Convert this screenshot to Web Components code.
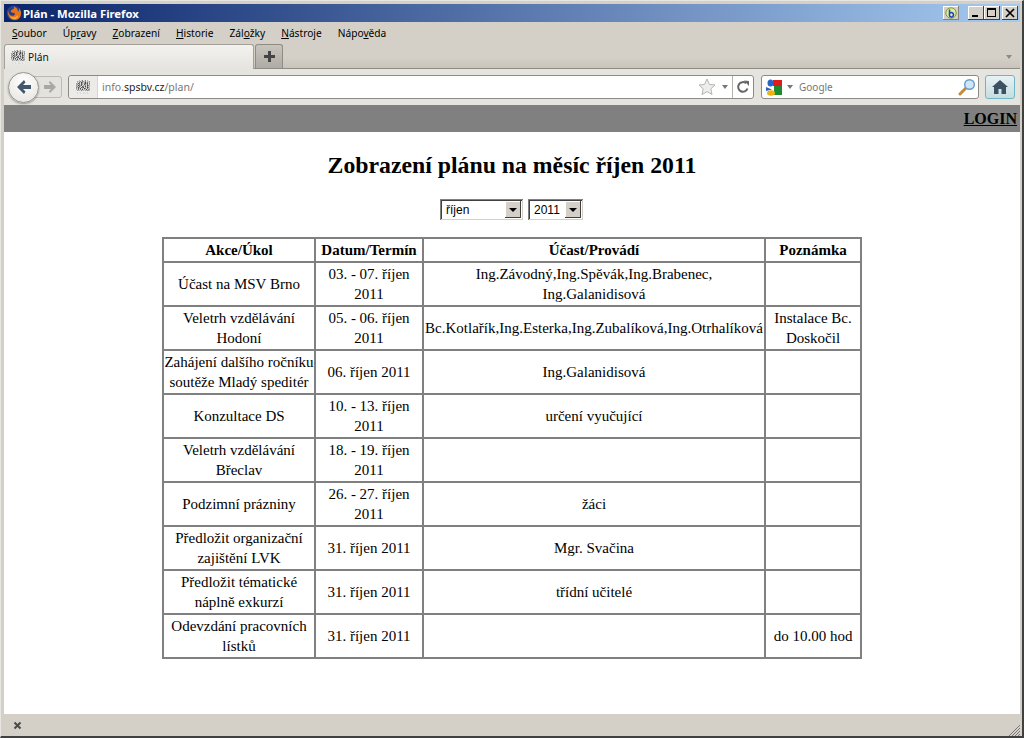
<!DOCTYPE html>
<html lang="cs">
<head>
<meta charset="utf-8">
<title>Plán - Mozilla Firefox</title>
<style>
  html, body { margin: 0; padding: 0; height: 100%; overflow: hidden; background: #d4d0c8; }
</style>
</head>
<body>
<browser-window>
  <plan-page></plan-page>
</browser-window>

<script>
// noisy grey site icon, one rect per pixel
function favicon() {
  const rows = [
    "................",
    "....9.a7.b7.9...",
    "..8a97b68a7c9a8.",
    "..9c6a47b84a6b8.",
    ".8a47c59a7495c7.",
    ".97b6a48c58a6b8.",
    ".8a4795b8a7c479.",
    ".97a68c57a4b6a9.",
    ".7a48b574c8a47a.",
    ".8b5a4c8a47b6a9.",
    ".9a6b7a4c8a4b78.",
    "..8a9b7a9c8a78a.",
    "...............",
    ".cbdcbdccbdcbdc.",
    ".dbcdbcdbcbdbcd.",
    "................"
  ];
  const grey = {"4":"#4c4c4c","5":"#5e5e5e","6":"#727272","7":"#888","8":"#9e9e9e","9":"#b4b4b4",a:"#c8c8c8",b:"#d8d8d8",c:"#e4e4e4",d:"#f0f0f0"};
  let out = "";
  rows.forEach((row, y) => {
    [...row].forEach((c, x) => {
      if (grey[c]) out += `<rect x="${x}" y="${y}" width="1" height="1" fill="${grey[c]}"/>`;
    });
  });
  return `<svg width="16" height="16" viewBox="0 0 16 16" style="flex:none;display:block">${out}</svg>`;
}
const FAVICON = favicon();

class TitleBar extends HTMLElement {
  constructor() {
    super();
    this.shadowDOM = this.attachShadow({mode: "open"});
    this.shadowDOM.innerHTML = `
    <style>
      :host {
        display: flex; align-items: center; height: 18px; flex: none;
        background: linear-gradient(to right, #0a246a, #a6caf0);
        color: #fff; font: bold 11.3px "Noto Sans", sans-serif;
      }
      .logo { margin: 0 1px 0 2px; flex: none; display: block; }
      .name { flex: 1; }
      .b { width: 16px; height: 14px; margin-right: 9px; background: #d4d0c8; display: flex; align-items: center; justify-content: center; box-shadow: inset -1px -1px #808080, inset 1px 1px #fff; }
      .btns { display: flex; margin-right: 2px; }
      .btn { width: 16px; height: 14px; background: #d4d0c8; box-shadow: inset -1px -1px #404040, inset 1px 1px #fff; display: block; }
      .btn.close { margin-left: 2px; }
    </style>
    <svg class="logo" width="16" height="16" viewBox="0 0 16 16">
      <circle cx="8" cy="8" r="7.400" fill="#27408b"/>
      <path d="M2 5C1 10 4 15 9 15c4 0 6-3 6-7 0-2-1-4-2-5 .5 2 0 3-1 3.500C12 4 10 2 7.500 1.500 8.500 3 8 4 6.500 4.500 5 5 4.500 6 5 7c1 1 3 .5 4 1.500C9 11 6 11.500 4 10 2.800 9 2.300 7 2 5z" fill="#e8741a"/>
      <path d="M4 11c2 2 6 2 8-1 .5 2-1.500 4-4 4-2 0-3.500-1.500-4-3z" fill="#f6b13a"/>
    </svg>
    <span class="name">Plán - Mozilla Firefox</span>
    <span class="b">
      <svg width="12" height="12" viewBox="0 0 12 12">
        <circle cx="6" cy="6" r="5.200" fill="#dfe9a8" stroke="#7f9a2c"/>
        <path d="M4.500 2.500v6.500M4.500 6.500a2.200 2.200 0 1 1 0 2.500" fill="none" stroke="#1746b5" stroke-width="1.500"/>
      </svg>
    </span>
    <span class="btns">
      <svg class="btn" viewBox="0 0 16 14"><rect x="4" y="9" width="6" height="2" fill="#000"/></svg>
      <svg class="btn" viewBox="0 0 16 14"><path d="M3 2h9v9H3zM4 4v6h7V4z" fill="#000" fill-rule="evenodd"/></svg>
      <svg class="btn close" viewBox="0 0 16 14"><path d="M4 3l8 8M12 3l-8 8" stroke="#000" stroke-width="1.700"/></svg>
    </span>`;
  }
}
customElements.define("title-bar", TitleBar);

class MenuBar extends HTMLElement {
  constructor() {
    super();
    this.shadowDOM = this.attachShadow({mode: "open"});
    this.shadowDOM.innerHTML = `
    <style>
      :host {
        display: flex; align-items: center; height: 22px; flex: none;
        padding-left: 8px; gap: 16px;
        font: 10.2px "Noto Sans", sans-serif; color: #000; background: #d4d0c8;
      }
      u { text-decoration: underline; }
    </style>
    <span><u>S</u>oubor</span>
    <span>Úp<u>r</u>avy</span>
    <span><u>Z</u>obrazení</span>
    <span><u>H</u>istorie</span>
    <span>Zál<u>o</u>žky</span>
    <span><u>N</u>ástroje</span>
    <span>Nápo<u>v</u>ěda</span>`;
  }
}
customElements.define("menu-bar", MenuBar);

class TabStrip extends HTMLElement {
  constructor() {
    super();
    this.shadowDOM = this.attachShadow({mode: "open"});
    this.shadowDOM.innerHTML = `
    <style>
      :host {
        display: flex; align-items: flex-end; height: 25px; flex: none; box-sizing: border-box;
        background: linear-gradient(#d4d0c8, #d4d0c8 55%, #c8c4bc);
        border-bottom: 1px solid #8f8c86;
        position: relative;
      }
      .tab {
        box-sizing: border-box; width: 250px; height: 25px; margin-bottom: -1px;
        background: linear-gradient(#f3f2ef, #e6e4df);
        border: 1px solid #a3a09a; border-bottom: 0; border-radius: 3px 3px 0 0;
        display: flex; align-items: center; gap: 2px; padding-left: 5px;
        font: 10.2px "Noto Sans", sans-serif; color: #111;
        position: relative; z-index: 1;
      }
      .new {
        box-sizing: border-box; width: 28px; height: 24px; margin-left: 1px;
        background: linear-gradient(#c9c5be, #aeaba4);
        border: 1px solid #8f8c86; border-bottom: 0; border-radius: 3px 3px 0 0;
        display: flex; align-items: center; justify-content: center;
      }
      .more { position: absolute; right: 8px; bottom: 9px; width: 0; height: 0; border: 3px solid transparent; border-top: 4px solid #8c8a84; border-bottom: 0; }
    </style>
    <div class="tab">${FAVICON}<span>Plán</span></div>
    <div class="new">
      <svg width="11" height="11" viewBox="0 0 11 11"><path d="M4 0h3v4h4v3H7v4H4V7H0V4h4z" fill="#444"/></svg>
    </div>
    <div class="more"></div>`;
  }
}
customElements.define("tab-strip", TabStrip);

class NavBar extends HTMLElement {
  constructor() {
    super();
    this.shadowDOM = this.attachShadow({mode: "open"});
    this.shadowDOM.innerHTML = `
    <style>
      :host {
        display: flex; align-items: center; height: 36px; flex: none; box-sizing: border-box;
        background: #e6e4df; padding: 0 0 0 4px;
        font: 10.5px "Noto Sans", sans-serif;
      }
      .nav { display: flex; align-items: center; flex: none; width: 58px; position: relative; height: 32px; }
      .back {
        width: 31px; height: 31px; border-radius: 50%; box-sizing: border-box;
        background: radial-gradient(circle at 50% 30%, #fff, #e4e2dd);
        border: 1px solid #99968f; box-shadow: 0 1px 2px #0005;
        display: flex; align-items: center; justify-content: center; position: relative; z-index: 1;
      }
      .fwd {
        position: absolute; left: 24px; top: 5px; width: 30px; height: 22px; box-sizing: border-box;
        background: #e4e2dd; border: 1px solid #bdbab3; border-radius: 0 3px 3px 0;
        display: flex; align-items: center; justify-content: flex-end; padding-right: 5px;
      }
      .field {
        display: flex; align-items: center; height: 24px; box-sizing: border-box;
        background: #fff; border: 1px solid #8c8a84; border-radius: 3px;
      }
      .url { flex: none; width: 686px; margin-left: 2px; }
      .site { width: 28px; height: 22px; display: flex; align-items: center; justify-content: center; background: #ecebe7; border-right: 1px solid #d8d6d1; border-radius: 3px 0 0 3px; flex: none; }
      .addr { flex: 1; padding-left: 4px; color: #777; white-space: nowrap; }
      .addr b { font-weight: normal; color: #222; }
      .tri { width: 0; height: 0; border: 3px solid transparent; border-top: 4px solid #777; border-bottom: 0; flex: none; }
      .reload { width: 20px; height: 22px; border-left: 1px solid #b5b3ae; display: flex; align-items: center; justify-content: center; margin-left: 4px; flex: none; }
      .search { flex: none; width: 218px; margin-left: 7px; }
      .ph { flex: 1; color: #777; margin-left: 6px; font-size: 10px; }
      .home {
        flex: none; margin-left: 6px; width: 30px; height: 24px; box-sizing: border-box;
        background: linear-gradient(#e8f2f4, #c6dde2); border: 1px solid #6fb6c4; border-radius: 3px;
        display: flex; align-items: center; justify-content: center;
      }
    </style>
    <div class="nav">
      <div class="fwd">
        <svg width="12" height="12" viewBox="0 0 12 12"><path d="M6 0l6 6-6 6-1.200-1.800L7 8H0V4h7L4.800 1.800z" fill="#a9a8a4"/></svg>
      </div>
      <div class="back">
        <svg width="16" height="14" viewBox="0 0 16 14"><path d="M8 0L1 7l7 7 1.500-2.500L7 9h8V5H7l2.500-2.500z" fill="#44586c"/></svg>
      </div>
    </div>
    <div class="field url">
      <div class="site">${FAVICON}</div>
      <div class="addr">info.<b>spsbv.cz</b>/plan/</div>
      <svg width="18" height="18" viewBox="0 0 18 18"><path d="M9 1l2.400 5.400 5.600.6-4.200 3.800 1.200 5.700L9 13.600 4 16.500l1.200-5.700L1 7l5.600-.6z" fill="#eee" stroke="#b5b5b0"/></svg>
      <div class="tri" style="margin-left:6px"></div>
      <div class="reload">
        <svg width="14" height="14" viewBox="0 0 14 14"><path d="M11.500 8.500A4.800 4.800 0 1 1 10 3.200" fill="none" stroke="#666" stroke-width="2"/><path d="M8 .5L13 1v5z" fill="#666"/></svg>
      </div>
    </div>
    <div class="field search">
      <svg width="17" height="17" viewBox="0 0 17 17" style="margin-left:4px;flex:none">
        <path d="M7 1h9v6H7z" fill="#e01b1b"/>
        <path d="M8 7h8v9H8z" fill="#1f8a2e"/>
        <ellipse cx="4.500" cy="4" rx="3" ry="3.500" fill="#2a62c9"/>
        <path d="M0 8l6 2.500L0 12z" fill="#2a62c9"/>
        <ellipse cx="5" cy="14" rx="4" ry="2.800" fill="#f0b312"/>
      </svg>
      <div class="tri" style="margin-left:4px"></div>
      <div class="ph">Google</div>
      <svg width="18" height="18" viewBox="0 0 18 18" style="margin-right:2px;flex:none">
        <path d="M8 10l-6 6" stroke="#c68a3c" stroke-width="3" stroke-linecap="round"/>
        <circle cx="11.500" cy="6.500" r="4.800" fill="#cfe6fa" stroke="#6a9cc4" stroke-width="1.400"/>
      </svg>
    </div>
    <div class="home">
      <svg width="16" height="14" viewBox="0 0 16 14"><path d="M8 0l8 7h-2v7H9.500V9h-3v5H2V7H0z" fill="#3d5163"/></svg>
    </div>`;
  }
}
customElements.define("nav-bar", NavBar);

class StatusBar extends HTMLElement {
  constructor() {
    super();
    this.shadowDOM = this.attachShadow({mode: "open"});
    this.shadowDOM.innerHTML = `
    <style>
      :host {
        display: flex; align-items: center; justify-content: space-between; height: 22px; flex: none;
        background: #d4d0c8; padding-left: 9px;
      }
      svg { display: block; }
    </style>
    <svg width="9" height="9" viewBox="0 0 9 9"><path d="M1.500 1.500l6 6M7.500 1.500l-6 6" stroke="#4a4a48" stroke-width="2"/></svg>
    <svg width="12" height="12" viewBox="0 0 12 12" style="margin-top:9px">
      <path d="M1 12L12 1M4 12l8-8M7 12l5-5M10 12l2-2" stroke="#777" stroke-width="1"/>
    </svg>`;
  }
}
customElements.define("status-bar", StatusBar);

class BrowserWindow extends HTMLElement {
  constructor() {
    super();
    this.shadowDOM = this.attachShadow({mode: "open"});
    this.shadowDOM.innerHTML = `
    <style>
      :host {
        display: flex; flex-direction: column; box-sizing: border-box;
        width: 1024px; height: 738px; overflow: hidden;
        background: #d4d0c8;
        border-style: solid; border-color: #e8e6e0 #404040 #404040 #e8e6e0;
        border-width: 1px 2px 2px 1px;
        padding: 3px 2px 0 3px;
      }
      .view { flex: 1; min-height: 0; display: flex; overflow: hidden; background: #fff; }
    </style>
    <title-bar></title-bar>
    <menu-bar></menu-bar>
    <tab-strip></tab-strip>
    <nav-bar></nav-bar>
    <div class="view"><slot></slot></div>
    <status-bar></status-bar>`;
  }
}
customElements.define("browser-window", BrowserWindow);

class PlanSelect extends HTMLElement {
  constructor() {
    super();
    this.shadowDOM = this.attachShadow({mode: "open"});
  }
  connectedCallback() {
    this.shadowDOM.innerHTML = `
    <style>
      :host {
        display: inline-flex; align-items: center; box-sizing: border-box;
        height: 21px; width: ${this.getAttribute("width")}px;
        background: #fff; padding: 2px;
        box-shadow: inset 1px 1px #808080, inset -1px -1px #d4d0c8, inset 2px 2px #404040;
        font: 12px "Liberation Sans", sans-serif; color: #000;
      }
      .val { flex: 1; padding-left: 4px; white-space: nowrap; }
      .arrow {
        width: 16px; height: 17px; background: #d4d0c8; flex: none;
        box-shadow: inset -1px -1px #404040, inset 1px 1px #fff;
        display: flex; align-items: center; justify-content: center;
      }
      .arrow i { width: 0; height: 0; border: 4px solid transparent; border-top: 4px solid #000; border-bottom: 0; }
    </style>
    <span class="val"><slot></slot></span>
    <span class="arrow"><i></i></span>`;
  }
}
customElements.define("plan-select", PlanSelect);

class PlanTable extends HTMLElement {
  constructor() {
    super();
    this.shadowDOM = this.attachShadow({mode: "open"});
  }
  set rows(rows) {
    this._rows = rows;
    this.render();
  }
  render() {
    this.shadowDOM.innerHTML = `
    <style>
      :host { display: block; width: 700px; }
      table {
        border-collapse: separate; border-spacing: 0; table-layout: fixed; width: 700px;
        border: 1px solid #808080;
        font: 15px "Liberation Serif", "Times New Roman", serif; color: #000;
      }
      th, td {
        border: 1px solid #808080; text-align: center; padding: 1px 0; line-height: 20px;
        box-sizing: border-box;
      }
      th { font-weight: bold; height: 24px; }
      td { height: 44px; }
    </style>
    <table>
      <colgroup><col style="width:152px"><col style="width:108px"><col style="width:342px"><col style="width:96px"></colgroup>
      <tr><th>Akce/Úkol</th><th>Datum/Termín</th><th>Účast/Provádí</th><th>Poznámka</th></tr>
      ${this._rows.map(r => `<tr>${r.map(c => `<td>${c}</td>`).join("")}</tr>`).join("")}
    </table>`;
  }
}
customElements.define("plan-table", PlanTable);

class PlanPage extends HTMLElement {
  constructor() {
    super();
    this.shadowDOM = this.attachShadow({mode: "open"});
    this.shadowDOM.innerHTML = `
    <style>
      :host {
        display: flex; flex-direction: column; align-items: center; flex: 1;
        background: #fff; font-family: "Liberation Serif", "Times New Roman", serif; color: #000;
      }
      .top { align-self: stretch; height: 27px; background: #808080; display: flex; justify-content: flex-end; align-items: center; flex: none; }
      .top a { color: #000; font-weight: bold; font-size: 16px; text-decoration: underline; margin-right: 3px; }
      h1 { font-size: 23.75px; margin: 19px 0 20px; line-height: 28px; font-weight: bold; }
      .sel { display: flex; gap: 5px; margin-bottom: 17px; margin-right: 1px; }
    </style>
    <div class="top"><a>LOGIN</a></div>
    <h1>Zobrazení plánu na měsíc říjen 2011</h1>
    <div class="sel">
      <plan-select width="83">říjen</plan-select>
      <plan-select width="55">2011</plan-select>
    </div>
    <plan-table></plan-table>`;
    this.shadowDOM.querySelector("plan-table").rows = [
      ["Účast na MSV Brno", "03. - 07. říjen 2011", "Ing.Závodný,Ing.Spěvák,Ing.Brabenec,<br>Ing.Galanidisová", ""],
      ["Veletrh vzdělávání Hodoní", "05. - 06. říjen 2011", "Bc.Kotlařík,Ing.Esterka,Ing.Zubalíková,Ing.Otrhalíková", "Instalace Bc. Doskočil"],
      ["Zahájení dalšího ročníku soutěže Mladý speditér", "06. říjen 2011", "Ing.Galanidisová", ""],
      ["Konzultace DS", "10. - 13. říjen 2011", "určení vyučující", ""],
      ["Veletrh vzdělávání Břeclav", "18. - 19. říjen 2011", "", ""],
      ["Podzimní prázniny", "26. - 27. říjen 2011", "žáci", ""],
      ["Předložit organizační zajištění LVK", "31. říjen 2011", "Mgr. Svačina", ""],
      ["Předložit tématické náplně exkurzí", "31. říjen 2011", "třídní učitelé", ""],
      ["Odevzdání pracovních lístků", "31. říjen 2011", "", "do 10.00 hod"]
    ];
  }
}
customElements.define("plan-page", PlanPage);
</script>
</body>
</html>
